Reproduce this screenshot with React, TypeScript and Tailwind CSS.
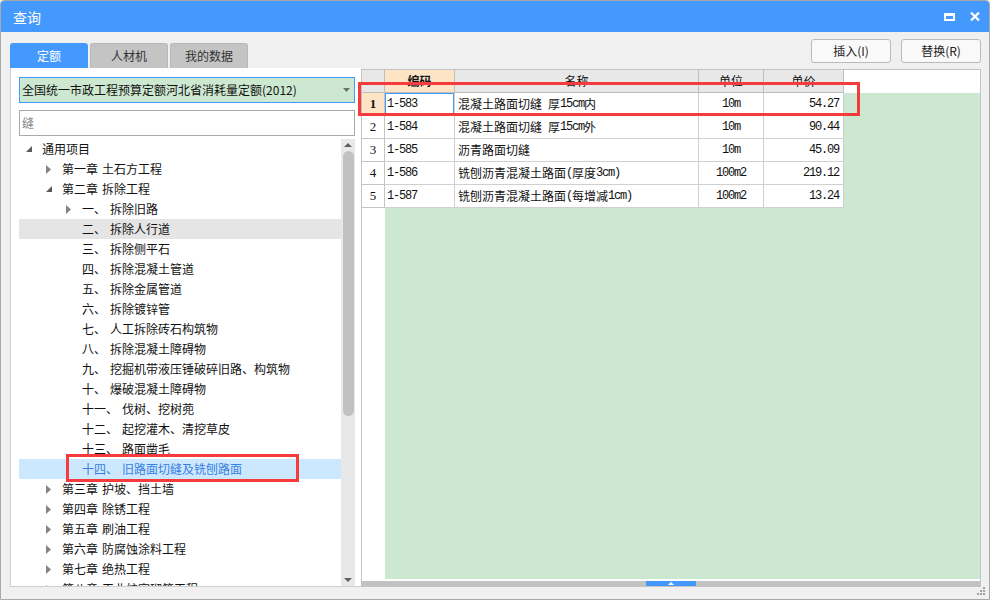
import React from "react";

type Node = { lv: 0 | 1 | 2; exp?: "open" | "closed"; label: string; text?: string; state?: "hover" | "sel" };

const tree: Node[] = [
  { lv: 0, exp: "open", label: "通用项目" },
  { lv: 1, exp: "closed", label: "第一章", text: "土石方工程" },
  { lv: 1, exp: "open", label: "第二章", text: "拆除工程" },
  { lv: 2, exp: "closed", label: "一、", text: "拆除旧路" },
  { lv: 2, label: "二、", text: "拆除人行道", state: "hover" },
  { lv: 2, label: "三、", text: "拆除侧平石" },
  { lv: 2, label: "四、", text: "拆除混凝土管道" },
  { lv: 2, label: "五、", text: "拆除金属管道" },
  { lv: 2, label: "六、", text: "拆除镀锌管" },
  { lv: 2, label: "七、", text: "人工拆除砖石构筑物" },
  { lv: 2, label: "八、", text: "拆除混凝土障碍物" },
  { lv: 2, label: "九、", text: "挖掘机带液压锤破碎旧路、构筑物" },
  { lv: 2, label: "十、", text: "爆破混凝土障碍物" },
  { lv: 2, label: "十一、", text: "伐树、挖树蔸" },
  { lv: 2, label: "十二、", text: "起挖灌木、清挖草皮" },
  { lv: 2, label: "十三、", text: "路面凿毛" },
  { lv: 2, label: "十四、", text: "旧路面切缝及铣刨路面", state: "sel" },
  { lv: 1, exp: "closed", label: "第三章", text: "护坡、挡土墙" },
  { lv: 1, exp: "closed", label: "第四章", text: "除锈工程" },
  { lv: 1, exp: "closed", label: "第五章", text: "刷油工程" },
  { lv: 1, exp: "closed", label: "第六章", text: "防腐蚀涂料工程" },
  { lv: 1, exp: "closed", label: "第七章", text: "绝热工程" },
  { lv: 1, exp: "closed", label: "第八章", text: "工业炉窑砌筑工程" },
];

const padByLevel = ["pl-[7px]", "pl-[27px]", "pl-[47px]"];

const items = [
  { no: "1", code: "1-583", name: "混凝土路面切缝 厚15cm内", unit: "10m", price: "54.27" },
  { no: "2", code: "1-584", name: "混凝土路面切缝 厚15cm外", unit: "10m", price: "90.44" },
  { no: "3", code: "1-585", name: "沥青路面切缝", unit: "10m", price: "45.09" },
  { no: "4", code: "1-586", name: "铣刨沥青混凝土路面(厚度3cm)", unit: "100m2", price: "219.12" },
  { no: "5", code: "1-587", name: "铣刨沥青混凝土路面(每增减1cm)", unit: "100m2", price: "13.24" },
];

const mono = "font-['Liberation_Mono',monospace] text-[12px] tracking-[-1.2px]";

function Mixed({ s }: { s: string }) {
  const parts = s.match(/[\x00-\x7f]+|[^\x00-\x7f]+/g) || [];
  return (
    <>
      {parts.map((p, i) =>
        /^[\x00-\x7f]+$/.test(p) ? (
          <span key={i} className={`${mono} whitespace-pre`}>
            {p}
          </span>
        ) : (
          <span key={i}>{p}</span>
        )
      )}
    </>
  );
}

function Expanded() {
  return (
    <svg width="6" height="6" viewBox="0 0 6 6">
      <polygon points="6,0 6,6 0,6" fill="#5a5a5a" />
    </svg>
  );
}
function Collapsed() {
  return (
    <svg width="5" height="9" viewBox="0 0 5 9">
      <polygon points="0,0 5,4.5 0,9" fill="#848484" />
    </svg>
  );
}

export default function App() {
  return (
    <div className="relative w-[990px] h-[600px] bg-[#f0f0f0] border border-[#a8a8a8] rounded-t-[4px] overflow-hidden flex flex-col font-['Noto_Sans_CJK_SC',sans-serif] text-[12px] text-[#111]">
      {/* Title bar */}
      <div className="h-[31px] shrink-0 bg-[#4499ff] flex items-center pl-[12px] pr-[9px]">
        <span className="text-white text-[14px] leading-none">查询</span>
        <div className="ml-auto flex items-center gap-[15px]">
          <svg width="11" height="8" viewBox="0 0 11 8">
            <path d="M0 0H11V8H0Z M2 3V6H9V3Z" fill="#fff" fillRule="evenodd" />
          </svg>
          <svg width="10" height="9" viewBox="0 0 10 9">
            <path d="M1 0.5L9 8.5M9 0.5L1 8.5" stroke="#fff" strokeWidth="2.2" />
          </svg>
        </div>
      </div>

      {/* Body */}
      <div className="flex-1 flex pl-[9px]">
        {/* Left column */}
        <div className="w-[351px] flex flex-col pt-[11px]">
          <div className="h-[25px] flex gap-[2px]">
            <div className="w-[78px] rounded-t-[3px] bg-[#4499ff] text-white flex items-center justify-center">定额</div>
            <div className="w-[78px] rounded-t-[3px] bg-[#c4c4c4] border border-b-0 border-[#b8b8b8] text-[#333] flex items-center justify-center">人材机</div>
            <div className="w-[78px] rounded-t-[3px] bg-[#c4c4c4] border border-b-0 border-[#b8b8b8] text-[#333] flex items-center justify-center">我的数据</div>
          </div>
          <div className="h-[519px] bg-white border-l border-b border-[#cfcfcf] flex flex-col pl-[8px] pt-[9px]">
            <div className="w-[336px] h-[26px] bg-[#cde8d0] border border-[#4499ff] flex items-center pl-[2px] pr-[4px]">
              <span className="text-[#111]">全国统一市政工程预算定额河北省消耗量定额(2012)</span>
              <svg className="ml-auto" width="7" height="4" viewBox="0 0 7 4">
                <polygon points="0,0 7,0 3.5,4" fill="#707070" />
              </svg>
            </div>
            <div className="w-[336px] h-[26px] mt-[7px] border border-[#a9a9a9] flex items-center pl-[2px] text-[#8a8a8a]">缝</div>
            <div className="w-[336px] h-[447px] mt-[3px] flex overflow-hidden">
              <div className="w-[322px] flex flex-col">
                {tree.map((n, i) => (
                  <div
                    key={i}
                    className={`h-[20px] shrink-0 flex items-center whitespace-nowrap ${padByLevel[n.lv]} ${
                      n.state === "hover" ? "bg-[#e5e5e5]" : n.state === "sel" ? "bg-[#cce8ff] text-[#3a7fe0]" : ""
                    }`}
                  >
                    <div className="w-[16px] h-full flex items-center">
                      {n.exp === "open" ? <Expanded /> : n.exp === "closed" ? <Collapsed /> : null}
                    </div>
                    <span>{n.label}</span>
                    {n.text && <span className="ml-[4px]">{n.text}</span>}
                  </div>
                ))}
              </div>
              <div className="w-[14px] h-full bg-[#e8e8e8] flex flex-col">
                <div className="h-[12px] flex items-center justify-center">
                  <svg width="8" height="4" viewBox="0 0 8 4">
                    <polygon points="0,4 8,4 4,0" fill="#606060" />
                  </svg>
                </div>
                <div className="w-[11px] h-[265px] mx-auto rounded-t-[6px] rounded-b-[6px] bg-[#c1c1c1]" />
                <div className="flex-1" />
                <div className="h-[12px] flex items-center justify-center">
                  <svg width="8" height="4" viewBox="0 0 8 4">
                    <polygon points="0,0 8,0 4,4" fill="#606060" />
                  </svg>
                </div>
              </div>
            </div>
          </div>
        </div>

        {/* Right column */}
        <div className="w-[620px] flex flex-col pt-[7px]">
          <div className="h-[24px] flex justify-end gap-[10px]">
            <button className="w-[80px] h-[24px] bg-[#f9f9f9] border border-[#bababa] rounded-[3px] text-[#222] text-[12px]">插入(I)</button>
            <button className="w-[80px] h-[24px] bg-[#f9f9f9] border border-[#bababa] rounded-[3px] text-[#222] text-[12px]">替换(R)</button>
          </div>
          <div className="mt-[6px] h-[518px] border border-[#c3c3c3] bg-white flex flex-col">
            <div className="h-[509px] flex flex-col overflow-hidden">
              {/* header */}
              <div className="h-[23px] shrink-0 flex">
                <div className="w-[23px] h-full bg-[#e8e8e8] border-r border-b border-[#bdbdbd]" />
                <div className="w-[70px] h-full bg-[#fde4c4] border-r border-b border-[#bdbdbd] flex items-center justify-center font-bold">编码</div>
                <div className="w-[244px] h-full bg-[#e8e8e8] border-r border-b border-[#bdbdbd] flex items-center justify-center">名称</div>
                <div className="w-[65px] h-full bg-[#e8e8e8] border-r border-b border-[#bdbdbd] flex items-center justify-center">单位</div>
                <div className="w-[80px] h-full bg-[#e8e8e8] border-r border-b border-[#bdbdbd] flex items-center justify-center">单价</div>
                <div className="flex-1 h-full bg-white" />
              </div>
              {items.map((r, i) => (
                <div key={r.no} className="h-[23px] shrink-0 flex">
                  <div
                    className={`w-[23px] h-full border-r border-b border-[#c4c4c4] flex items-center justify-center font-['Liberation_Serif',serif] text-[13px] ${
                      i === 0 ? "bg-[#fde4c4] font-bold" : "bg-white"
                    }`}
                  >
                    {r.no}
                  </div>
                  <div
                    className={`w-[70px] h-full border-r border-b border-[#d0d0d0] flex items-center pl-[2px] ${mono} ${
                      i === 0 ? "shadow-[inset_0_0_0_1px_#4499ff]" : ""
                    }`}
                  >
                    {r.code}
                  </div>
                  <div className="w-[244px] h-full border-r border-b border-[#d0d0d0] flex items-center pl-[3px] whitespace-nowrap">
                    <Mixed s={r.name} />
                  </div>
                  <div className={`w-[65px] h-full border-r border-b border-[#d0d0d0] flex items-center justify-center ${mono}`}>
                    {r.unit}
                  </div>
                  <div className={`w-[80px] h-full border-r border-b border-[#d0d0d0] flex items-center justify-end pr-[4px] ${mono}`}>
                    {r.price}
                  </div>
                  <div className="flex-1 h-full bg-[#cde8d0]" />
                </div>
              ))}
              <div className="flex-1 flex">
                <div className="w-[23px] bg-white" />
                <div className="flex-1 bg-[#cde8d0]" />
              </div>
            </div>
            <div className="h-[2px]" />
            <div className="h-[5px] bg-[#c2c2c2] flex">
              <div className="w-[284px]" />
              <div className="w-[50px] h-full bg-[#4499ff] flex items-center justify-center">
                <svg width="6" height="3" viewBox="0 0 6 3">
                  <polygon points="0,3 6,3 3,0" fill="#fff" />
                </svg>
              </div>
            </div>
          </div>
        </div>
      </div>

      {/* Red highlight boxes (overlays) */}
      <div className="absolute left-[357px] top-[81px] w-[502px] h-[34px] border-[3px] border-[#f53b3b] pointer-events-none" />
      <div className="absolute left-[65px] top-[453px] w-[233px] h-[28px] border-[3px] border-[#f53b3b] pointer-events-none" />

      {/* Resize grip */}
      <svg className="absolute left-[976px] top-[586px]" width="9" height="9" viewBox="0 0 9 9">
        <rect x="6" y="0" width="2" height="2" fill="#a0a0a0" />
        <rect x="3" y="3" width="2" height="2" fill="#a0a0a0" />
        <rect x="6" y="3" width="2" height="2" fill="#a0a0a0" />
        <rect x="0" y="6" width="2" height="2" fill="#a0a0a0" />
        <rect x="3" y="6" width="2" height="2" fill="#a0a0a0" />
        <rect x="6" y="6" width="2" height="2" fill="#a0a0a0" />
      </svg>
    </div>
  );
}
